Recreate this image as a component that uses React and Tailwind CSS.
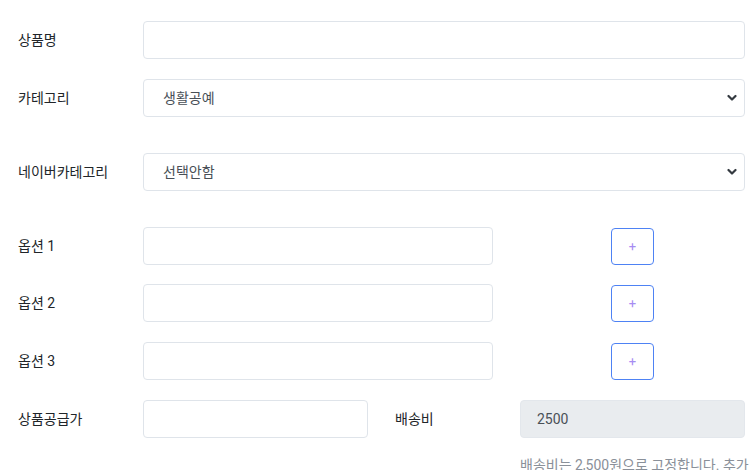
import React from "react";

const font = { fontFamily: "Roboto, 'Noto Sans CJK KR', sans-serif" };

function Chevron() {
  return (
    <svg width="10" height="7" viewBox="0 0 10 7" className="absolute right-[7px] top-1/2 -translate-y-1/2">
      <path d="M1.5 1.5 L5 5 L8.5 1.5" fill="none" stroke="#343a40" strokeWidth="2.2" strokeLinecap="round" strokeLinejoin="round" />
    </svg>
  );
}

function Field({ className = "" }) {
  return <div className={`h-[38px] border border-[#dfe4ea] rounded-[4px] bg-white ${className}`} />;
}

function Select({ value }) {
  return (
    <div className="relative flex-1 h-[38px] border border-[#dfe4ea] rounded-[4px] bg-white flex items-center pl-[19px] text-[14px] text-[#495057]">
      {value}
      <Chevron />
    </div>
  );
}

function Label({ children }) {
  return <div className="w-[125px] shrink-0 text-[14px] text-[#212529]">{children}</div>;
}

function OptionRow({ n, className = "" }) {
  return (
    <div className={`flex items-center h-[38px] ${className}`}>
      <Label>옵션 {n}</Label>
      <Field className="w-[350px]" />
      <div className="ml-[27px] w-[225px] flex justify-center">
        <button className="w-[43px] h-[37px] border border-[#4e82f4] rounded-[4px] bg-white flex items-center justify-center text-[13px] leading-none text-[#a68cf2]">
          +
        </button>
      </div>
    </div>
  );
}

export default function App() {
  return (
    <div className="w-[752px] h-[470px] overflow-hidden bg-white pl-[18px] pr-[7px] pt-[21px]" style={font}>
      <div className="flex items-center h-[38px]">
        <Label>상품명</Label>
        <Field className="flex-1" />
      </div>

      <div className="flex items-center h-[38px] mt-[20px]">
        <Label>카테고리</Label>
        <Select value="생활공예" />
      </div>

      <div className="flex items-center h-[38px] mt-[36px]">
        <Label>네이버카테고리</Label>
        <Select value="선택안함" />
      </div>

      <OptionRow n={1} className="mt-[36px]" />
      <OptionRow n={2} className="mt-[19px]" />
      <OptionRow n={3} className="mt-[20px]" />

      <div className="flex items-center h-[38px] mt-[20px]">
        <Label>상품공급가</Label>
        <Field className="w-[225px]" />
        <div className="w-[152px] pl-[27px] shrink-0 text-[14px] text-[#212529]">배송비</div>
        <div className="flex-1 h-[38px] rounded-[4px] bg-[#e9ecef] border border-[#e3e7ec] flex items-center pl-[16px] text-[14px] text-[#495057]">
          2500
        </div>
      </div>

      <div className="pl-[502px] mt-[17px] text-[14px] text-[#8a9099] whitespace-nowrap">
        배송비는 2,500원으로 고정합니다. 추가
      </div>
    </div>
  );
}
